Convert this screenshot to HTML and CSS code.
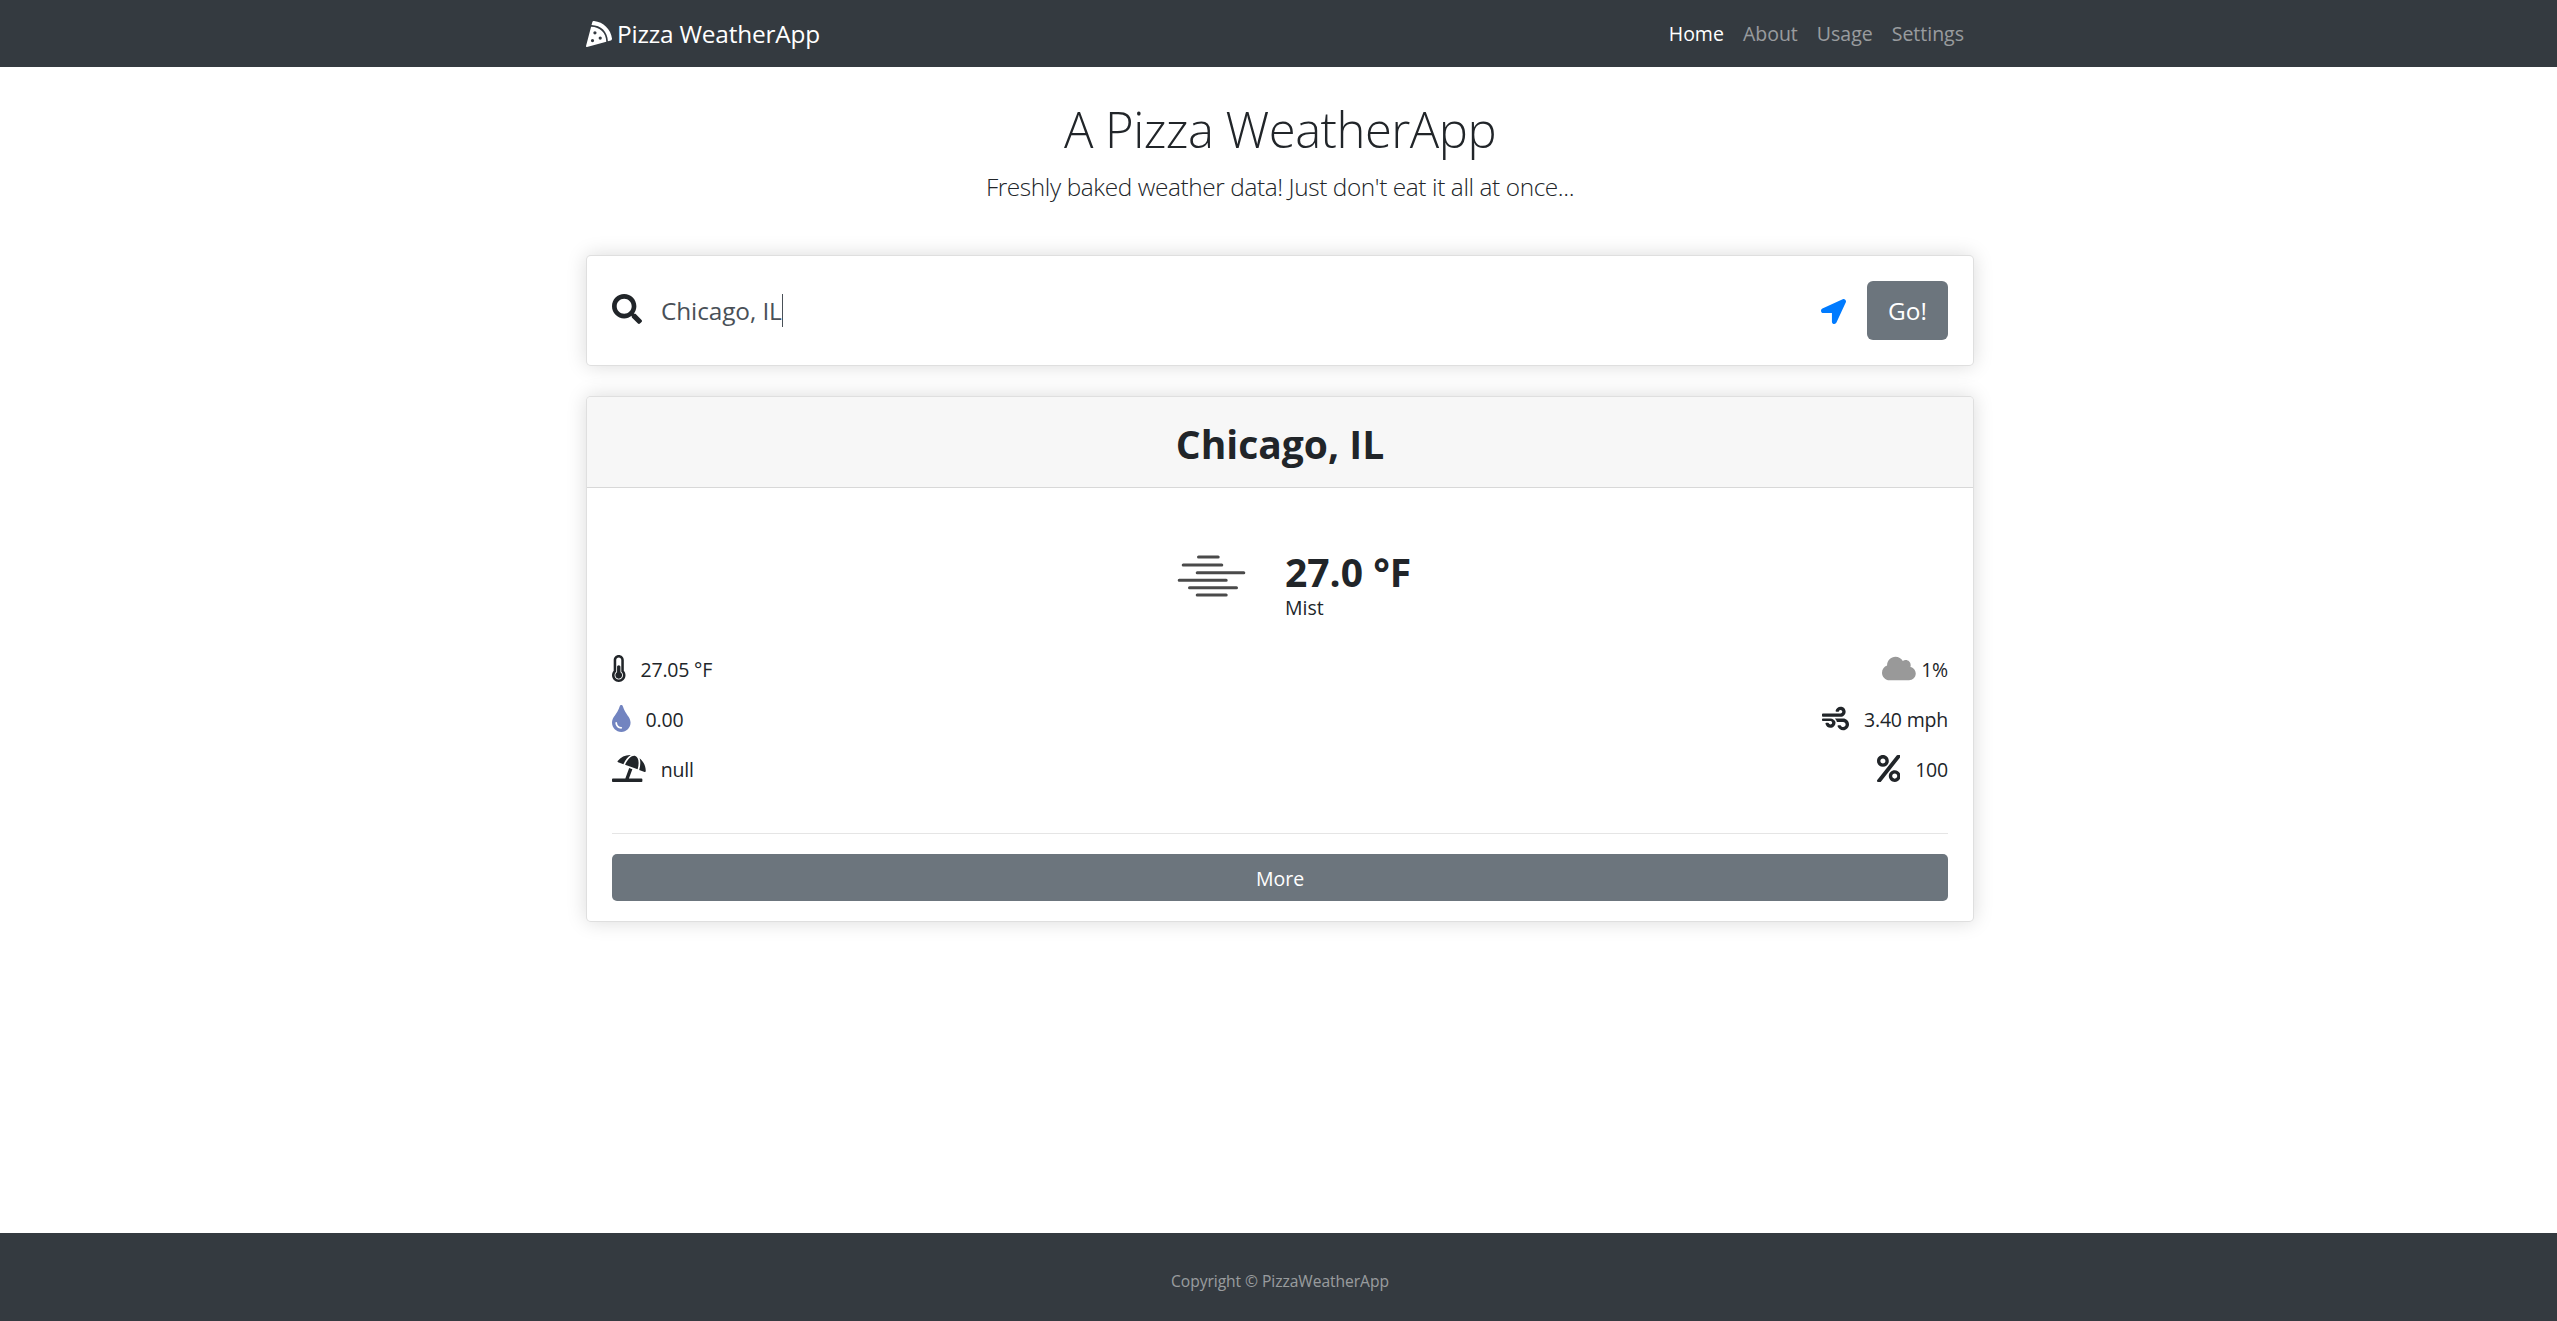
FILE: index.html
```html
<!DOCTYPE html>
<html lang="en">
<head>
<meta charset="utf-8">
<title>Pizza WeatherApp</title>
<link rel="stylesheet" href="styles.css">
</head>
<body>
<header class="navbar">
  <div class="container navbar-inner">
    <a class="brand"><svg class="brand-icon" viewBox="0 0 512 512"><path d="M158.87.15c-16.16-1.52-31.2 8.42-35.33 24.12l-14.81 56.27c187.62 5.49 314.54 130.61 322.48 317l56.94-15.78c15.72-4.36 25.49-19.68 23.62-35.9C490.89 165.08 340.78 17.32 158.87.15zm-58.47 112L.55 491.64a16.21 16.21 0 0 0 20 19.75l379-105.1c-4.27-174.89-123.08-292.14-299.15-294.1zM128 416a32 32 0 1 1 32-32 32 32 0 0 1-32 32zm48-152a32 32 0 1 1 32-32 32 32 0 0 1-32 32zm104 104a32 32 0 1 1 32-32 32 32 0 0 1-32 32z"/></svg><span class="brand-name">Pizza WeatherApp</span></a>
    <nav class="nav">
      <a class="nav-link active">Home</a>
      <a class="nav-link">About</a>
      <a class="nav-link">Usage</a>
      <a class="nav-link">Settings</a>
    </nav>
  </div>
</header>

<main class="container main">
  <div class="intro">
    <h1 class="intro-title">A Pizza WeatherApp</h1>
    <p class="intro-lead">Freshly baked weather data! Just don't eat it all at once...</p>
  </div>

  <form class="card search">
    <svg class="search-icon" viewBox="0 0 512 512"><path d="M505 442.7L405.3 343c-4.5-4.5-10.6-7-17-7H372c27.6-35.3 44-79.7 44-128C416 93.1 322.9 0 208 0S0 93.1 0 208s93.1 208 208 208c48.3 0 92.7-16.4 128-44v16.3c0 6.4 2.5 12.5 7 17l99.7 99.7c9.4 9.4 24.6 9.4 33.9 0l28.3-28.3c9.4-9.4 9.4-24.6.1-34zM208 336c-70.7 0-128-57.2-128-128 0-70.7 57.2-128 128-128 70.7 0 128 57.2 128 128 0 70.7-57.2 128-128 128z"/></svg>
    <div class="search-field"><span class="search-text">Chicago, IL</span><span class="caret"></span></div>
    <svg class="locate-icon" viewBox="0 0 512 512"><path d="M444.52 3.52L28.74 195.42c-47.97 22.39-31.98 92.75 19.19 92.75h175.91v175.91c0 51.17 70.36 67.17 92.75 19.19l191.9-415.78c15.99-38.39-25.59-79.97-63.97-63.97z"/></svg>
    <button class="btn btn-go" type="button">Go!</button>
  </form>

  <section class="card weather">
    <div class="card-header"><h2 class="city">Chicago, IL</h2></div>
    <div class="card-body">
      <div class="current">
        <svg class="mist-icon" viewBox="0 0 70 44"><path d="M21.5 3h19.700M6.200 10.900h38.600M20.200 18.700h46.600M2.200 26.300h47M12.500 33.800h47M20.200 41.100h29"/></svg>
        <div class="current-text">
          <div class="temp">27.0 °F</div>
          <div class="condition">Mist</div>
        </div>
      </div>
      <div class="details">
        <ul class="detail-list">
          <li class="detail"><svg class="icon" viewBox="0 0 256 512"><path d="M192 384c0 35.346-28.654 64-64 64s-64-28.654-64-64c0-23.685 12.876-44.349 32-55.417V224c0-17.673 14.327-32 32-32s32 14.327 32 32v104.583c19.124 11.068 32 31.732 32 55.417zm32-84.653c19.912 22.563 32 52.194 32 84.653 0 70.696-57.303 128-128 128-.299 0-.609-.001-.909-.003C56.789 511.509-.357 453.636.002 383.333.166 351.135 12.225 321.757 32 299.347V96c0-53.019 42.981-96 96-96s96 42.981 96 96v203.347zM208 384c0-34.339-19.370-52.190-32-66.502V96c0-26.467-21.533-48-48-48S80 69.533 80 96v221.498c-12.732 14.428-31.825 32.100-31.999 66.080-.224 43.876 35.563 80.116 79.423 80.420L128 464c44.112 0 80-35.888 80-80z"/></svg><span class="value">27.05 °F</span></li>
          <li class="detail"><svg class="icon icon-drop" viewBox="0 0 352 512"><path d="M205.22 22.09c-7.94-28.78-49.44-30.12-58.44 0C100.01 179.85 0 222.72 0 333.91 0 432.35 78.72 512 176 512s176-79.65 176-178.09c0-111.75-99.79-153.34-146.78-311.82zM176 448c-61.75 0-112-50.25-112-112 0-8.84 7.16-16 16-16s16 7.16 16 16c0 44.110 35.890 80 80 80 8.840 0 16 7.160 16 16s-7.160 16-16 16z"/></svg><span class="value">0.00</span></li>
          <li class="detail"><svg class="icon" viewBox="0 0 640 512"><path d="M115.38 136.9l102.11 37.18c35.19-81.54 86.21-144.29 139-173.7-95.88-4.89-188.78 36.96-248.53 111.8-6.69 8.4-2.66 21.05 7.42 24.72zm132.25 48.16l238.48 86.83c35.76-121.38 18.7-231.66-42.63-253.98-7.4-2.7-15.13-4-23.09-4-58.02.01-128.27 69.17-172.76 171.15zM521.48 60.5c6.22 16.3 10.83 34.6 13.2 55.19 5.74 49.89-1.42 108.23-18.95 166.98l102.62 37.36c10.09 3.67 21.31-3.43 21.57-14.17 2.32-95.69-41.91-187.44-118.44-245.36zM560 447.98H321.06L386 269.5l-60.14-21.9-72.9 200.37H16c-8.84 0-16 7.16-16 16.01v32.01C0 504.83 7.16 512 16 512h544c8.84 0 16-7.17 16-16.01v-32.01c0-8.84-7.16-16-16-16z"/></svg><span class="value">null</span></li>
        </ul>
        <ul class="detail-list detail-list-end">
          <li class="detail detail-tight"><svg class="icon icon-cloud" viewBox="0 0 640 512"><path d="M537.6 226.6c4.1-10.7 6.4-22.4 6.4-34.6 0-53-43-96-96-96-19.7 0-38.1 6-53.3 16.2C367 64.2 315.3 32 256 32c-88.4 0-160 71.6-160 160 0 2.7.1 5.4.2 8.1C40.2 219.8 0 273.2 0 336c0 79.5 64.5 144 144 144h368c70.7 0 128-57.3 128-128 0-61.9-44-113.6-102.4-125.4z"/></svg><span class="value">1%</span></li>
          <li class="detail"><svg class="icon" viewBox="0 0 512 512"><path d="M156.7 256H16c-8.8 0-16 7.2-16 16v16c0 8.8 7.2 16 16 16h142.2c15.9 0 30.8 10.9 33.4 26.6 3.3 20-12.1 37.4-31.6 37.4-14.1 0-26.1-9.2-30.4-21.9-2.1-6.3-8.6-10.1-15.2-10.1H81.6c-9.8 0-17.7 8.8-15.9 18.4 8.6 44.1 47.6 77.6 94.2 77.6 57.1 0 102.7-50.1 95.2-108.6C249 291 205.4 256 156.7 256zM16 224h336c59.7 0 106.8-54.8 93.8-116.7-7.6-36.2-36.9-65.5-73.1-73.1-55.4-11.6-105.1 24.9-114.9 75.5-1.9 9.6 6.1 18.3 15.8 18.3h32.8c6.7 0 13.1-3.8 15.2-10.1C325.9 105.2 337.9 96 352 96c19.4 0 34.9 17.4 31.6 37.4-2.6 15.7-17.4 26.6-33.4 26.6H16c-8.8 0-16 7.2-16 16v32c0 8.8 7.2 16 16 16zm384 32H243.7c19.3 16.6 33.2 38.8 39.8 64H400c26.5 0 48 21.5 48 48s-21.5 48-48 48c-17.9 0-33.3-9.9-41.6-24.4-2.9-5-8.7-7.6-14.5-7.6h-33.8c-10.9 0-19 10.8-15.3 21.1 17.8 50.6 70.5 84.8 129.4 72.3 41.2-8.7 75.1-41.6 84.7-82.7C526 321.5 470.5 256 400 256z"/></svg><span class="value">3.40 mph</span></li>
          <li class="detail"><svg class="icon" viewBox="0 0 448 512"><path d="M112 224c61.9 0 112-50.1 112-112S173.9 0 112 0 0 50.1 0 112s50.1 112 112 112zm0-160c26.5 0 48 21.5 48 48s-21.5 48-48 48-48-21.5-48-48 21.5-48 48-48zm224 224c-61.9 0-112 50.1-112 112s50.1 112 112 112 112-50.1 112-112-50.1-112-112-112zm0 160c-26.5 0-48-21.5-48-48s21.5-48 48-48 48 21.5 48 48-21.5 48-48 48zM392.3.2l31.6-.1c19.4-.1 30.9 21.8 19.7 37.8L77.4 501.6a23.95 23.95 0 0 1-19.6 10.2l-33.4.1c-19.5 0-30.9-21.9-19.7-37.8l368-463.7C377.2 4 384.500.2 392.300.2z"/></svg><span class="value">100</span></li>
        </ul>
      </div>
      <hr class="divider">
      <button class="btn btn-more" type="button">More</button>
    </div>
  </section>
</main>

<footer class="footer">Copyright © PizzaWeatherApp</footer>
</body>
</html>
```
FILE: styles.css
```css
*, *::before, *::after { box-sizing: border-box; }
html, body { height: 100%; }
body {
  margin: 0;
  display: flex;
  flex-direction: column;
  background: #fff;
  color: #212529;
  font-family: "Open Sans", "Noto Sans", sans-serif;
  font-size: 19.5px;
  line-height: 30px;
}
h1, h2, p, ul { margin: 0; padding: 0; }
ul { list-style: none; }
svg { display: block; flex: none; fill: currentColor; }

.container { width: 1391px; margin: 0 auto; padding-left: 3px; }

.navbar { flex: none; height: 67px; background: #343a40; color: #fff; }
.navbar-inner { height: 100%; display: flex; align-items: center; justify-content: space-between; }
.brand { display: flex; align-items: center; gap: 5px; font-size: 24.4px; letter-spacing: -.19px; }
.brand-icon { width: 26px; height: 26px; }
.nav { display: flex; gap: 19px; padding-right: 10px; }
.nav-link { color: rgba(255, 255, 255, .5); }
.nav-link.active { color: #fff; }

.main { flex: 1; }
.intro { text-align: center; padding-top: 32px; height: 188px; }
.intro-title { font-size: 49px; font-weight: 300; line-height: 60px; letter-spacing: -.52px; }
.intro-lead { margin-top: 9px; font-size: 24.4px; font-weight: 300; line-height: 38px; letter-spacing: -.4px; }

.card {
  border: 1px solid rgba(0, 0, 0, .125);
  border-radius: 5px;
  background: #fff;
  box-shadow: 0 0 20px rgba(0, 0, 0, .15);
}

.search { display: flex; align-items: center; height: 111px; padding: 0 25px; }
.search-icon { width: 30px; height: 30px; margin-bottom: 4px; }
.search-field { flex: 1; display: flex; align-items: center; padding-left: 19px; color: #495057; font-size: 24.4px; letter-spacing: -.1px; }
.search-text { padding-top: 1px; }
.caret { width: 1px; height: 33px; background: #495057; }
.locate-icon { width: 25px; height: 25px; margin: 2px 21px 0 0; color: #007bff; }

.btn {
  border: 0;
  border-radius: 5px;
  background: #6c757d;
  color: #fff;
  font: inherit;
  text-align: center;
}
.btn-go { width: 81px; height: 59px; padding: 1px 0 0; border-radius: 6px; font-size: 24.4px; }

.weather { margin-top: 30px; height: 526px; }
.card-header { height: 91px; border-bottom: 1px solid rgba(0, 0, 0, .125); background: #f7f7f7; border-radius: 4px 4px 0 0; text-align: center; padding-top: 23px; }
.city { font-size: 39px; font-weight: 700; line-height: 48px; }
.card-body { padding: 57px 25px 0; }
.current { display: flex; padding-left: 565px; }
.mist-icon { width: 70px; height: 44px; margin-top: 9px; fill: none; stroke: #4a4a4a; stroke-width: 3; stroke-linecap: round; }
.current-text { margin-left: 38px; padding-top: 3px; }
.temp { font-size: 39px; font-weight: 700; line-height: 48px; }
.condition { margin-top: -3px; line-height: 30px; }

.details { display: flex; justify-content: space-between; margin: 22px 0 38px; }
.detail { display: flex; align-items: center; gap: 15px; height: 50px; letter-spacing: -.2px; }
.detail-list-end .detail { justify-content: flex-end; }
.detail-list-end .detail-tight { gap: 5px; }
.icon { height: 27px; width: auto; margin-bottom: 4px; }
.icon-drop { color: #7284c0; }
.icon-cloud { color: #999; }

.divider { margin: 0; border: 0; border-top: 1px solid rgba(0, 0, 0, .1); }
.btn-more { display: block; width: 100%; height: 47px; margin-top: 20px; padding: 2px 0 0; }

.footer { flex: none; height: 88px; padding: 33px 0 0 3px; background: #343a40; color: rgba(255, 255, 255, .5); font-size: 15.6px; letter-spacing: -.05px; text-align: center; }
```
